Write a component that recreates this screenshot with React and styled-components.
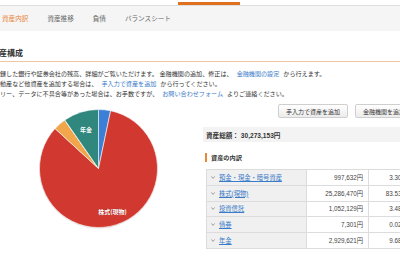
import React from "react";
import styled, { createGlobalStyle } from "styled-components";

const Global = createGlobalStyle`
  html, body { margin: 0; padding: 0; background: #fff; }
  body {
    font-family: "Liberation Sans", "Noto Sans CJK JP", sans-serif;
    color: #333;
    width: 400px; height: 260px; overflow: hidden;
  }
`;

const Page = styled.div`
  width: 400px;
  height: 260px;
  overflow: hidden;
`;

const TopStrip = styled.div`
  height: 5px;
  border-bottom: 1px solid #dedede;
  display: flex;
  align-items: flex-end;
`;

const Indicator = styled.div`
  margin-left: 178px;
  width: 62px;
  height: 3px;
  background: #e0701e;
`;

const TabBar = styled.nav`
  height: 25px;
  background: #f5f5f5;
  display: flex;
  align-items: center;
  gap: 19px;
  padding-left: 2px;
`;

const Tab = styled.span`
  font-size: 6.6px;
  line-height: 10px;
  color: ${(p) => (p.$active ? "#e8873a" : "#666")};
  white-space: nowrap;
`;

const Heading = styled.h2`
  margin: 17px 0 0 -9px;
  font-size: 8px;
  line-height: 12px;
  font-weight: bold;
  color: #333;
  padding-bottom: 1px;
  border-bottom: 1px solid #f0c7a2;
  width: 420px;
`;

const Lead = styled.div`
  margin-top: 7px;
  font-size: 6.1px;
  color: #333;
`;

const LeadLine = styled.div`
  height: 10px;
  line-height: 10px;
  white-space: nowrap;
`;

const Link = styled.a`
  color: #3a7bc8;
  margin: ${(p) => (p.$inCell ? "0" : "0 4px")};
  text-decoration: ${(p) => (p.$inCell ? "underline" : "none")};
`;

const Lower = styled.div`
  margin-top: 2px;
  display: flex;
`;

const ChartCol = styled.div`
  width: 203px;
  flex: none;
`;

const PieSvg = styled.svg`
  display: block;
  margin: 8px 0 0 39px;
`;

const SideCol = styled.div`
  width: 210px;
  flex: none;
  display: flex;
  flex-direction: column;
`;

const ButtonRow = styled.div`
  margin-top: 3px;
  display: flex;
  justify-content: flex-end;
  gap: 7px;
`;

const Button = styled.button`
  height: 14px;
  width: ${(p) => p.$w}px;
  padding: 0;
  border: 1px solid #cfcfcf;
  border-radius: 2px;
  background: linear-gradient(#ffffff, #ececec);
  font-family: "Liberation Sans", "Noto Sans CJK JP", sans-serif;
  font-size: 6px;
  color: #333;
  white-space: nowrap;
`;

const TotalBox = styled.div`
  margin-top: 9px;
  height: 15px;
  background: #f3f3f3;
  display: flex;
  align-items: center;
  padding-left: 3px;
  font-size: 6.6px;
  font-weight: bold;
  color: #333;
`;

const SectionTitle = styled.h3`
  margin: 11px 0 0 2px;
  height: 9px;
  border-left: 2px solid #e8873a;
  padding-left: 4px;
  font-size: 6.2px;
  line-height: 9px;
  font-weight: bold;
  color: #333;
`;

const Table = styled.div`
  margin: 7px 0 0 3px;
  border-top: 1px solid #dcdcdc;
  border-left: 1px solid #dcdcdc;
`;

const Row = styled.div`
  display: grid;
  grid-template-columns: 100px 62px 1fr;
  height: 14.8px;
  border-bottom: 1px solid #dcdcdc;
`;

const Cell = styled.div`
  display: flex;
  align-items: center;
  justify-content: ${(p) => (p.$num ? "flex-end" : "flex-start")};
  padding: ${(p) => (p.$num ? "0 5px 0 0" : "0 0 0 4px")};
  background: ${(p) => (p.$head ? "#f0f0f0" : "#fff")};
  border-right: 1px solid #dcdcdc;
  font-size: 6.3px;
  color: #444;
  white-space: nowrap;
  gap: 4px;
`;

const Chevron = () => (
  <svg width="4" height="3" viewBox="0 0 4 3">
    <path d="M0.3 0.4 L2 2.4 L3.7 0.4" fill="none" stroke="#888" strokeWidth="0.8" />
  </svg>
);

const rows = [
  { name: "預金・現金・暗号資産", amount: "997,632円", pct: "3.30%" },
  { name: "株式(現物)", amount: "25,286,470円", pct: "83.53%" },
  { name: "投資信託", amount: "1,052,129円", pct: "3.48%" },
  { name: "債券", amount: "7,301円", pct: "0.02%" },
  { name: "年金", amount: "2,929,621円", pct: "9.68%" },
];

const slices = [
  { v: 3.3, c: "#3b80d6" },
  { v: 83.53, c: "#d1382f" },
  { v: 3.48, c: "#f1a64c" },
  { v: 0.02, c: "#6a4fa8" },
  { v: 9.68, c: "#2f877d" },
];

function Pie() {
  const cx = 59.5, cy = 59.5, r = 59;
  let acc = 0;
  const pt = (a) => {
    const rad = ((a - 90) * Math.PI) / 180;
    return [cx + r * Math.cos(rad), cy + r * Math.sin(rad)];
  };
  return (
    <PieSvg width="120" height="121" viewBox="0 0 120 121">
      <circle cx={cx} cy={cy + 0.6} r={r + 0.4} fill="rgba(0,0,0,0.12)" />
      {slices.map((s, i) => {
        const a0 = (acc / 100) * 360;
        acc += s.v;
        const a1 = (acc / 100) * 360;
        const [x0, y0] = pt(a0);
        const [x1, y1] = pt(a1);
        const large = a1 - a0 > 180 ? 1 : 0;
        return (
          <path
            key={i}
            d={`M${cx} ${cy} L${x0} ${y0} A${r} ${r} 0 ${large} 1 ${x1} ${y1} Z`}
            fill={s.c}
            stroke="#fff"
            strokeWidth="0.6"
            strokeLinejoin="round"
          />
        );
      })}
      <text x="47" y="23" textAnchor="middle" fontSize="6" fontWeight="bold" fill="#fff"
        fontFamily='"Noto Sans CJK JP", sans-serif'>年金</text>
      <text x="73.5" y="104.5" textAnchor="middle" fontSize="6" fontWeight="bold" fill="#fff"
        stroke="rgba(0,0,0,0.25)" strokeWidth="0.4" paintOrder="stroke"
        fontFamily='"Noto Sans CJK JP", sans-serif'>株式(現物)</text>
    </PieSvg>
  );
}

export default function App() {
  return (
    <Page>
      <Global />
      <TopStrip>
        <Indicator />
      </TopStrip>
      <TabBar>
        <Tab $active>資産内訳</Tab>
        <Tab>資産推移</Tab>
        <Tab>負債</Tab>
        <Tab>バランスシート</Tab>
      </TabBar>
      <Heading>資産構成</Heading>
      <Lead>
        <LeadLine>
          録した銀行や証券会社の残高、詳細がご覧いただけます。 金融機関の追加、修正は、
          <Link>金融機関の設定</Link>から行えます。
        </LeadLine>
        <LeadLine>
          動産など他資産を追加する場合は、<Link>手入力で資産を追加</Link>から行ってください。
        </LeadLine>
        <LeadLine>
          リー、データに不具合等があった場合は、お手数ですが、<Link>お問い合わせフォーム</Link>よりご連絡ください。
        </LeadLine>
      </Lead>
      <Lower>
        <ChartCol>
          <Pie />
        </ChartCol>
        <SideCol>
          <ButtonRow>
            <Button $w={70}>手入力で資産を追加</Button>
            <Button $w={58}>金融機関を追加</Button>
          </ButtonRow>
          <TotalBox>資産総額： 30,273,153円</TotalBox>
          <SectionTitle>資産の内訳</SectionTitle>
          <Table>
            {rows.map((r) => (
              <Row key={r.name}>
                <Cell $head>
                  <Chevron />
                  <Link $inCell>{r.name}</Link>
                </Cell>
                <Cell $num>{r.amount}</Cell>
                <Cell $num>{r.pct}</Cell>
              </Row>
            ))}
          </Table>
        </SideCol>
      </Lower>
    </Page>
  );
}
